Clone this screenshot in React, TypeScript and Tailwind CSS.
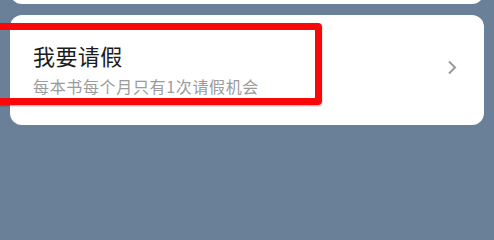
export default function App() {
  return (
    <div
      className="relative w-[494px] h-[240px] overflow-hidden bg-[#6a8099] px-[10px]"
      style={{ fontFamily: '"Noto Sans CJK SC", "Noto Sans", sans-serif' }}
    >
      <div className="-mt-[16px] h-[20px] rounded-b-[12px] bg-white" />

      <div className="mt-[11px] flex h-[110px] items-center justify-between rounded-[12px] bg-white pl-[23px] pr-[27px]">
        <div className="flex flex-col pb-[3px]">
          <span className="text-[22px] leading-[28px] tracking-[0.4px] text-[#1c1c1c]">我要请假</span>
          <span className="mt-[7px] text-[16px] leading-[20px] tracking-[0.65px] text-[#9b9b9b]">
            每本书每个月只有1次请假机会
          </span>
        </div>
        <svg width="10" height="15" viewBox="0 0 10 15" className="-mt-[6px]">
          <polyline points="2,1.5 8,7.5 2,13.5" fill="none" stroke="#9a9a9a" strokeWidth="2" />
        </svg>
      </div>

      <div className="absolute left-[-20px] top-[23px] h-[82px] w-[342px] rounded-[4px] border-[7px] border-[#f80808] shadow-[0_1px_2px_rgba(0,0,0,0.35)]" />
    </div>
  );
}
